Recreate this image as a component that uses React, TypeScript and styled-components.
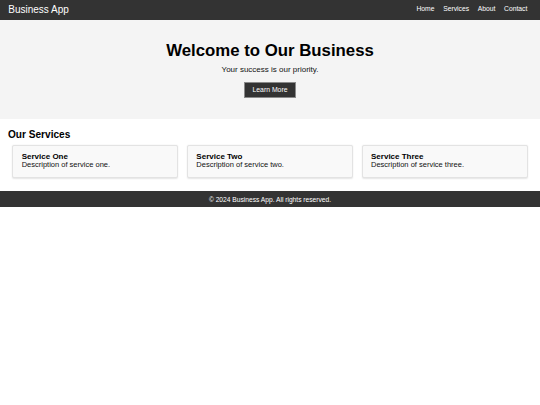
import React from "react";
import styled, { createGlobalStyle } from "styled-components";

const GlobalStyle = createGlobalStyle`
  html, body {
    margin: 0;
    padding: 0;
    background: #ffffff;
    font-family: "Liberation Sans", Arial, sans-serif;
    color: #000;
  }
  * { box-sizing: border-box; }
`;

const Header = styled.header`
  height: 19.7px;
  background: #333333;
  color: #ffffff;
  display: flex;
  align-items: center;
  justify-content: space-between;
  padding: 0 8.3px;
`;

const Brand = styled.div`
  font-size: 10px;
  line-height: 1;
  margin-top: -0.4px;
`;

const Nav = styled.nav`
  display: flex;
  align-items: center;
  gap: 8.7px;
  padding-right: 4.4px;
`;

const NavLink = styled.a`
  color: #ffffff;
  text-decoration: none;
  font-size: 6.75px;
  line-height: 1;
`;

const Hero = styled.section`
  background: #f4f4f4;
  padding: 21.6px 0 21px;
  display: flex;
  flex-direction: column;
  align-items: center;
  text-align: center;
`;

const HeroTitle = styled.h1`
  margin: 0 0 4.2px;
  font-size: 16.8px;
  font-weight: bold;
  line-height: 19.2px;
`;

const HeroSub = styled.p`
  margin: 0 0 7.8px;
  font-size: 8px;
  line-height: 9.2px;
  color: #111;
`;

const Button = styled.button`
  width: 52px;
  height: 16px;
  padding: 0;
  background: #333333;
  color: #ffffff;
  border: 1px solid #8a8a8a;
  font-family: "Liberation Sans", Arial, sans-serif;
  font-size: 6.85px;
  cursor: pointer;
`;

const Services = styled.section`
  padding: 10.3px 8px 8px;
`;

const SectionTitle = styled.h2`
  margin: 0;
  font-size: 10.1px;
  font-weight: bold;
  line-height: 11.5px;
`;

const CardRow = styled.div`
  display: flex;
`;

const Card = styled.div`
  flex: 1;
  margin: 4.3px;
  height: 33.6px;
  background: #f9f9f9;
  border: 1px solid #e3e3e3;
  border-radius: 2px;
  box-shadow: 0 0.5px 1.5px rgba(0, 0, 0, 0.1);
  padding: 7.6px 8.4px 0;
`;

const CardTitle = styled.h3`
  margin: 0;
  font-size: 8px;
  font-weight: bold;
  line-height: 8px;
`;

const CardText = styled.p`
  margin: 0;
  font-size: 7.5px;
  line-height: 7.5px;
  color: #111;
`;

const Footer = styled.footer`
  height: 16.7px;
  background: #333333;
  color: #ffffff;
  display: flex;
  align-items: center;
  justify-content: center;
  font-size: 6.67px;
`;

const services = [
  { title: "Service One", text: "Description of service one." },
  { title: "Service Two", text: "Description of service two." },
  { title: "Service Three", text: "Description of service three." },
];

export default function App() {
  return (
    <>
      <GlobalStyle />
      <Header>
        <Brand>Business App</Brand>
        <Nav>
          <NavLink href="#">Home</NavLink>
          <NavLink href="#">Services</NavLink>
          <NavLink href="#">About</NavLink>
          <NavLink href="#">Contact</NavLink>
        </Nav>
      </Header>
      <Hero>
        <HeroTitle>Welcome to Our Business</HeroTitle>
        <HeroSub>Your success is our priority.</HeroSub>
        <Button>Learn More</Button>
      </Hero>
      <Services>
        <SectionTitle>Our Services</SectionTitle>
        <CardRow>
          {services.map((s) => (
            <Card key={s.title}>
              <CardTitle>{s.title}</CardTitle>
              <CardText>{s.text}</CardText>
            </Card>
          ))}
        </CardRow>
      </Services>
      <Footer>© 2024 Business App. All rights reserved.</Footer>
    </>
  );
}
